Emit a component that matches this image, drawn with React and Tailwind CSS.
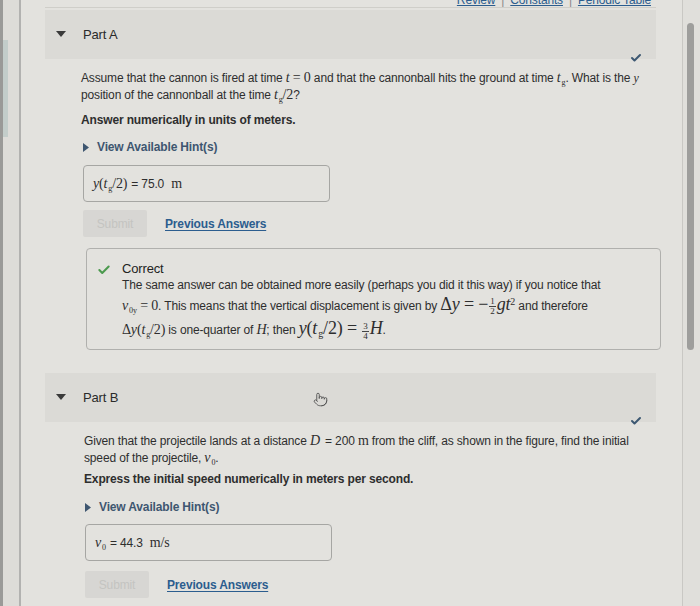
import { Check, Pointer } from "lucide-react";

const serif = "font-['Liberation_Serif',serif] italic leading-none";
const roman = "font-['Liberation_Serif',serif] leading-none";

function Sub({ children, size = "text-[8px]" }) {
  return <span className={`${size} not-italic relative top-[3px] ml-[1px] ${roman}`}>{children}</span>;
}

function Frac({ top, bottom }) {
  return (
    <span className={`inline-flex flex-col items-center align-middle mx-[1px] text-[9px] leading-[9px] not-italic ${roman}`}>
      <span className="px-[1px] border-b border-[#444]">{top}</span>
      <span>{bottom}</span>
    </span>
  );
}

function Tri() {
  return (
    <svg width="10" height="7" viewBox="0 0 10 7" className="shrink-0">
      <polygon points="0,0 10,0 5,6" fill="#3a3a3a" />
    </svg>
  );
}

function HintLink() {
  return (
    <div className="flex items-center gap-[8px] text-[12px] font-bold text-[#3e5670] leading-[16px]">
      <svg width="6" height="9" viewBox="0 0 6 9">
        <polygon points="0,0 6,4.5 0,9" fill="#3e5670" />
      </svg>
      View Available Hint(s)
    </div>
  );
}

function PartHeader({ label, cursor }) {
  return (
    <div className="relative h-[49px] bg-[#dbdad6] flex items-center pl-[11px]">
      <Tri />
      <span className="ml-[17px] text-[13px] font-medium text-[#2a2a2a]">{label}</span>
      {cursor && (
        <Pointer className="absolute left-[268px] top-[19px] w-[15px] h-[15px] text-[#555]" strokeWidth={1.5} />
      )}
      <Check className="absolute right-[14px] bottom-[-5px] w-[12px] h-[12px] text-[#3d5872]" strokeWidth={4} />
    </div>
  );
}

function SubmitRow({ gap }) {
  return (
    <div className={"flex items-center " + gap}>
      <div className="w-[64px] h-[27px] bg-[#d7d6d3] rounded-[2px] flex items-center justify-center text-[12px] text-[#c4c4c1]">
        Submit
      </div>
      <span className="ml-[18px] text-[12px] font-semibold text-[#2c5d8e] underline underline-offset-2">
        Previous Answers
      </span>
    </div>
  );
}

export default function App() {
  return (
    <div className="w-[700px] h-[606px] overflow-hidden bg-[#e3e2de] flex font-['Liberation_Sans',Arial,sans-serif] text-[#2e2e2e] tracking-[-0.15px]">
      {/* left edge */}
      <div className="w-[21px] shrink-0 flex border-r-2 border-[#b2b2b0] bg-[#dddcd8]">
        <div className="w-[3px] bg-[#9a9a98]" />
        <div className="flex-1 pt-[40px]">
          <div className="w-[5px] h-[97px] bg-[#c3cdca]" />
        </div>
      </div>

      {/* main column */}
      <div className="flex-1 pl-[24px] pr-[26px] relative">
        <div className="h-[8px] overflow-hidden flex justify-end pr-[5px] border-b border-[#cfcec9]">
          <div className="-mt-[9px] flex gap-[6px] text-[12px] text-[#2c5d8e]">
            <span className="underline">Review</span>
            <span className="text-[#888]">|</span>
            <span className="underline">Constants</span>
            <span className="text-[#888]">|</span>
            <span className="underline">Periodic Table</span>
          </div>
        </div>

        <div className="mt-[2px]">
          <PartHeader label="Part A" />
          <div className="pl-[36px]">
            <p className="mt-[11px] text-[12px] leading-[17px]">
              Assume that the cannon is fired at time <span className={serif + " text-[14px]"}>t</span>{" "}
              <span className={roman + " text-[14px]"}>= 0</span> and that the cannonball hits the ground at time{" "}
              <span className={serif + " text-[14px]"}>t<Sub>g</Sub></span>. What is the{" "}
              <span className={serif}>y</span> position of the cannonball at the time{" "}
              <span className={serif + " text-[14px]"}>t<Sub>g</Sub></span>
              <span className={roman + " text-[14px]"}>/2</span>?
            </p>
            <p className="mt-[8px] text-[12px] font-bold leading-[17px]">Answer numerically in units of meters.</p>
            <div className="mt-[10px] pl-[2px]">
              <HintLink />
            </div>
            <div className="mt-[10px] ml-[2px] w-[247px] h-[37px] border border-[#a6a6a3] rounded-[4px] flex items-center pl-[9px] text-[12px]">
              <span className={serif + " text-[14px]"}>y</span>
              <span className={roman + " text-[14px]"}>(</span>
              <span className={serif + " text-[14px]"}>t<Sub>g</Sub></span>
              <span className={roman + " text-[14px]"}>/2)</span>
              <span className="ml-[4px]">= 75.0</span>
              <span className={"ml-[7px] text-[14px] " + roman}>m</span>
            </div>
            <div className="ml-[2px]">
              <SubmitRow gap="mt-[8px]" />
            </div>
            <div className="mt-[11px] ml-[5px] mr-[-5px] h-[102px] border border-[#b0b0ad] rounded-[4px] flex pt-[11px] pl-[10px]">
              <Check className="w-[14px] h-[14px] text-[#4c9a4e] mt-[3px]" strokeWidth={3.5} />
              <div className="ml-[11px] text-[12px] leading-[17px]">
                <div className="text-[13px] font-medium text-[#222]">Correct</div>
                <div>The same answer can be obtained more easily (perhaps you did it this way) if you notice that</div>
                <div className="mt-[1px]">
                  <span className={serif + " text-[14px]"}>v<Sub>0y</Sub></span>
                  <span className={roman + " text-[14px]"}> = 0</span>. This means that the vertical
                  displacement is given by{" "}
                  <span className={roman + " text-[18px]"}>Δ</span>
                  <span className={serif + " text-[18px]"}>y</span>
                  <span className={roman + " text-[18px]"}> = −</span>
                  <Frac top="1" bottom="2" />
                  <span className={serif + " text-[18px]"}>gt</span>
                  <sup className={"text-[10px] " + roman}>2</sup> and therefore
                </div>
                <div className="mt-[3px]">
                  <span className={roman + " text-[14px]"}>Δ</span>
                  <span className={serif + " text-[14px]"}>y</span>
                  <span className={roman + " text-[14px]"}>(</span>
                  <span className={serif + " text-[14px]"}>t<Sub>g</Sub></span>
                  <span className={roman + " text-[14px]"}>/2)</span> is one-quarter of{" "}
                  <span className={serif + " text-[14px]"}>H</span>; then{" "}
                  <span className={serif + " text-[18px]"}>y</span>
                  <span className={roman + " text-[18px]"}>(</span>
                  <span className={serif + " text-[18px]"}>t<Sub size="text-[10px]">g</Sub></span>
                  <span className={roman + " text-[18px]"}>/2) = </span>
                  <Frac top="3" bottom="4" />
                  <span className={serif + " text-[18px]"}>H</span>.
                </div>
              </div>
            </div>
          </div>
        </div>

        <div className="mt-[23px]">
          <PartHeader label="Part B" cursor />
          <div className="pl-[39px]">
            <p className="mt-[11px] text-[12px] leading-[17px]">
              Given that the projectile lands at a distance <span className={serif + " text-[14px] mr-[2px]"}>D</span>
              {" "}= 200 <span className={roman + " text-[14px]"}>m</span> from the cliff, as shown in the figure, find
              the initial speed of the projectile,{" "}
              <span className={serif + " text-[14px]"}>v<Sub>0</Sub></span>.
            </p>
            <p className="mt-[4px] text-[12px] font-bold leading-[17px]">
              Express the initial speed numerically in meters per second.
            </p>
            <div className="mt-[11px] pl-[1px]">
              <HintLink />
            </div>
            <div className="mt-[9px] ml-[1px] w-[247px] h-[37px] border border-[#a6a6a3] rounded-[4px] flex items-center pl-[9px] text-[12px]">
              <span className={serif + " text-[14px]"}>v<Sub>0</Sub></span>
              <span className="ml-[4px]">= 44.3</span>
              <span className={"ml-[7px] text-[14px] " + roman}>m/s</span>
            </div>
            <div className="ml-[1px]">
              <SubmitRow gap="mt-[10px]" />
            </div>
          </div>
        </div>
      </div>

      {/* scrollbar */}
      <div className="w-[18px] shrink-0 border-l border-[#c9c8c4] bg-[#e0dfdb] pt-[23px] pl-[4px]">
        <div className="w-[7px] h-[327px] rounded-full bg-[#9e9e9c]" />
      </div>
    </div>
  );
}
